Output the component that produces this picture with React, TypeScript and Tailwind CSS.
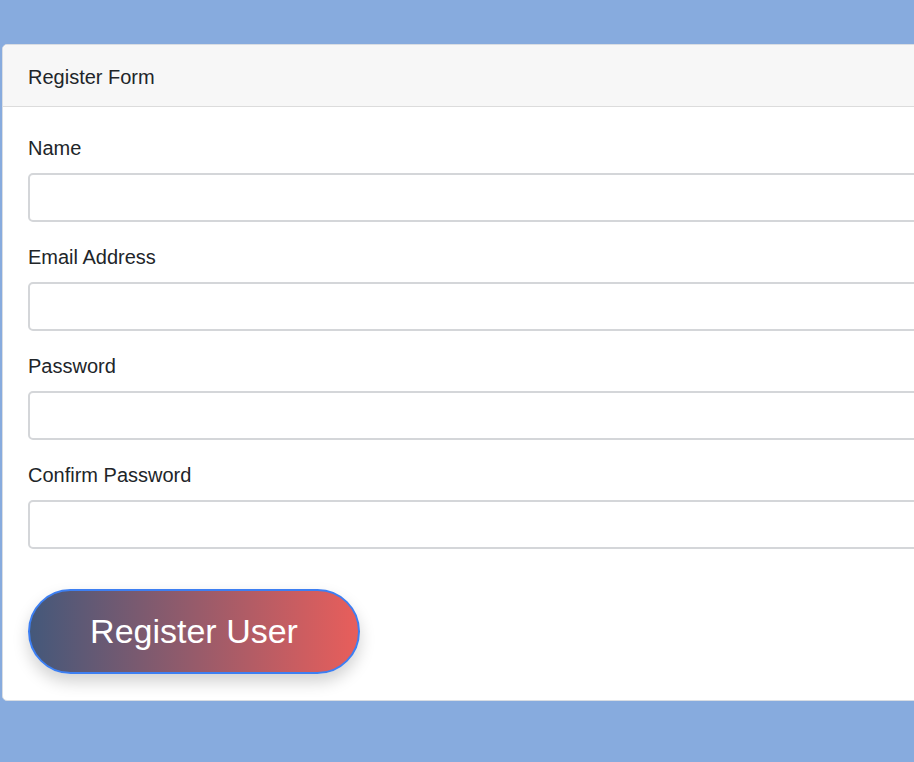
import React from "react";

export default function App() {
  const fields = ["Name", "Email Address", "Password", "Confirm Password"];
  return (
    <div
      className="w-[914px] h-[762px] overflow-hidden bg-[#87abde] pt-[44px] pl-[2px]"
      style={{ fontFamily: '"Liberation Sans", Arial, sans-serif' }}
    >
      <div className="w-[1100px] bg-white border border-[#d9dde3] rounded-[5px] text-[#212529]">
        <div className="h-[62px] bg-[#f7f7f7] border-b border-[#dcdcdc] rounded-t-[5px] px-[25px] pt-[2px] flex items-center text-[20px]">
          Register Form
        </div>
        <div className="px-[25px] pt-[26px] pb-[26px]">
          {fields.map((f) => (
            <div key={f} className="mb-[20px]">
              <div className="h-[30px] leading-[30px] text-[20px] mb-[10px]">{f}</div>
              <div className="h-[49px] border-2 border-[#d4d6d9] rounded-[5px] bg-white" />
            </div>
          ))}
          <div className="pt-[20px]">
            <button
              className="w-[332px] h-[85px] rounded-full border-2 border-[#3d7ff2] text-white text-[34px] bg-[linear-gradient(to_right,#44587a,#e85e5b)] shadow-[0_8px_16px_rgba(0,0,0,0.18)]"
              style={{ fontFamily: '"Liberation Sans", Arial, sans-serif' }}
            >
              Register User
            </button>
          </div>
        </div>
      </div>
    </div>
  );
}
